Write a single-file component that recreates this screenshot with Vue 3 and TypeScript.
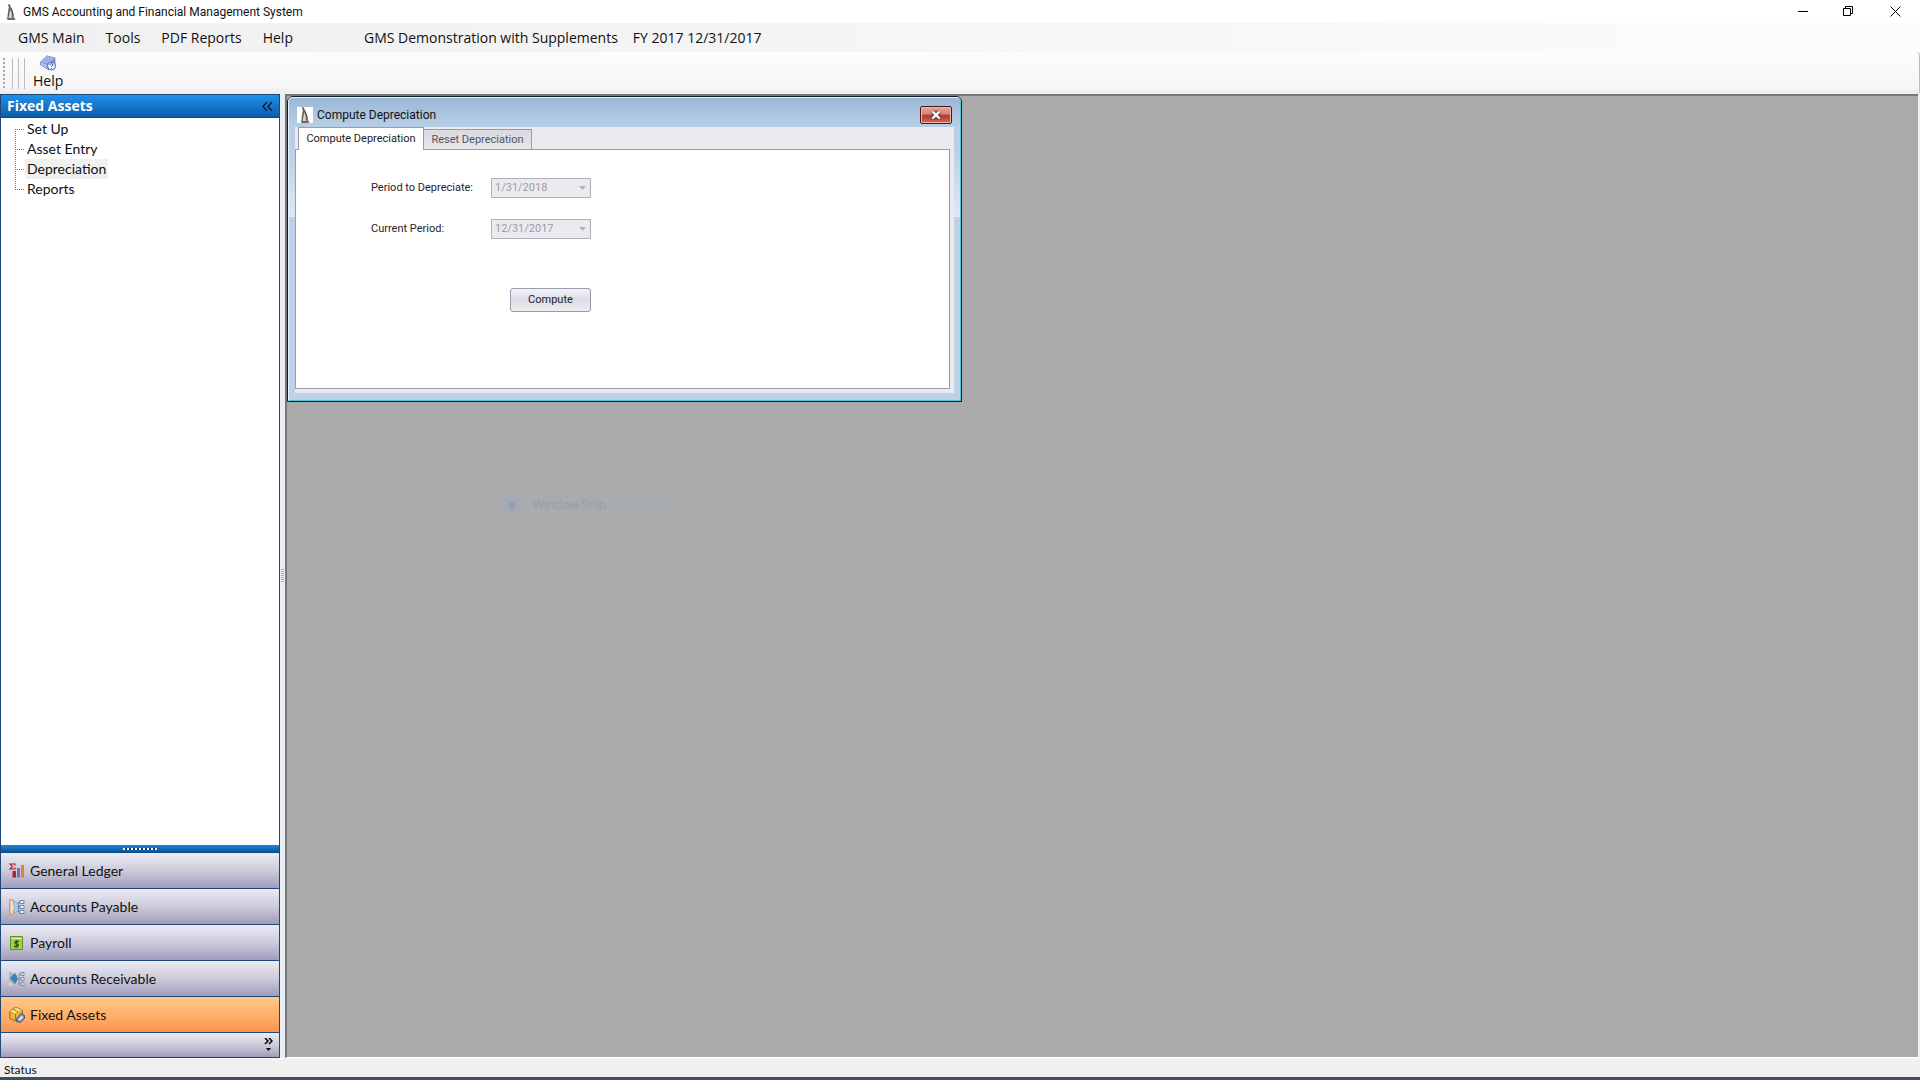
<script setup lang="ts">
import { ref } from 'vue'

interface NavGroup {
  id: string
  label: string
}

const menus: string[] = ['GMS Main', 'Tools', 'PDF Reports', 'Help']
const treeItems: string[] = ['Set Up', 'Asset Entry', 'Depreciation', 'Reports']
const groups: NavGroup[] = [
  { id: 'gl', label: 'General Ledger' },
  { id: 'ap', label: 'Accounts Payable' },
  { id: 'pr', label: 'Payroll' },
  { id: 'ar', label: 'Accounts Receivable' },
  { id: 'fa', label: 'Fixed Assets' },
]

const selectedItem = ref('Depreciation')
const selectedGroup = ref('fa')
const period = ref('1/31/2018')
const current = ref('12/31/2017')
</script>

<template>
  <div class="app">
    <header class="titlebar">
      <svg class="penguin" width="10" height="16" viewBox="0 0 10 16">
        <path d="M1.500.5L3.500 0l1 2 2 4 1.200 4v3l1.800 1.500-.5 1.500H2l-1.500-1 1-2.500L2 7l.8-4z" fill="#8b867d" />
        <path d="M3.800 5l1.700 4v5H3.200V9z" fill="#dedbd4" />
        <path d="M3 1l1 3-1.800 8M5 4l2 6v3M2 15h6" stroke="#45413c" stroke-width=".8" fill="none" />
      </svg>
      <h1>GMS Accounting and Financial Management System</h1>
      <div class="controls">
        <button type="button" aria-label="Minimize">
          <svg width="11" height="11"><path d="M0 5.500h10" stroke="#000" /></svg>
        </button>
        <button type="button" aria-label="Restore">
          <svg width="11" height="11">
            <path d="M.5 2.500h7v7h-7zM2.500 2.500v-2h7v7h-2" fill="none" stroke="#000" />
          </svg>
        </button>
        <button type="button" aria-label="Close">
          <svg width="11" height="11"><path d="M.5.5l10 10M10.500.5l-10 10" stroke="#000" /></svg>
        </button>
      </div>
    </header>

    <nav class="menubar">
      <button v-for="m in menus" :key="m" type="button">{{ m }}</button>
      <span class="company">GMS Demonstration with Supplements</span>
      <span>FY 2017 12/31/2017</span>
    </nav>

    <div class="toolbar">
      <span class="grip"></span>
      <span class="bars"><i></i><i></i><i></i></span>
      <button type="button" class="tool">
        <svg width="16" height="16" viewBox="0 0 16 16">
          <path d="M.5 7L7 .8 15 3v7l-6 5L.5 10z" fill="#7f96d2" stroke="#6078b8" stroke-width=".7" />
          <path d="M.5 7L7 .8 15 3 8 9z" fill="#9fb1e2" />
          <path d="M1 8.200l7 3M1 9.500l7 3.500" stroke="#e4eafa" stroke-width=".8" />
          <circle cx="11.500" cy="11" r="4" fill="#eef3ff" stroke="#4a69b8" />
          <path d="M10 10q.2-1.600 1.600-1.500 1.600.2 1.200 1.500L11.500 11.300v.6M11.500 13v.8" fill="none" stroke="#2850a8" />
        </svg>
        <span>Help</span>
      </button>
    </div>

    <div class="body">
      <aside class="sidebar">
        <div class="side-head">
          <h2>Fixed Assets</h2>
          <button type="button" aria-label="Collapse">
            <svg width="11" height="9"><path d="M5 0L1 4.500 5 9M10 0L6 4.500 10 9" fill="none" stroke="#06182e" stroke-width="1.300" /></svg>
          </button>
        </div>
        <ul class="tree">
          <li v-for="t in treeItems" :key="t">
            <a href="#" :class="{ on: t === selectedItem }" @click.prevent="selectedItem = t">{{ t }}</a>
          </li>
        </ul>
        <div class="side-split"><span></span></div>
        <button
          v-for="g in groups"
          :key="g.id"
          type="button"
          class="group"
          :class="{ on: g.id === selectedGroup }"
          @click="selectedGroup = g.id"
        >
          <svg width="16" height="16" viewBox="0 0 16 16">
            <template v-if="g.id === 'gl'">
              <path d="M6 2.500V1H1l2.500 2.500L1 6h5V4.500" fill="none" stroke="#a82432" stroke-width="1.200" />
              <path d="M3.500 8H7v6.500H3.500z" fill="#b5202f" />
              <path d="M8 5h3v9.500H8z" fill="#71749b" />
              <path d="M12 2h3v12.500h-3z" fill="#dd8138" />
            </template>
            <template v-else-if="g.id === 'ap'">
              <path d="M.8.8h3l3.700 4v6l-3.700 4.500h-3z" fill="#f8dcc4" stroke="#e07a4c" />
              <path d="M4 2q6 1 6 6t-6 6q3-6 0-12z" fill="#a8cfe6" stroke="#8aa9c0" />
              <path d="M8 8h3M9.500 3v10M9.500 3H11M9.500 13H11" stroke="#6d84aa" fill="none" />
              <path d="M11 1.500h4v3h-4zM11 6.500h4v3h-4zM11 11.500h4v3h-4z" fill="#eef4ff" stroke="#6d84aa" />
            </template>
            <template v-else-if="g.id === 'pr'">
              <path d="M1.500 1.500h12v13h-12z" fill="#a4cf4a" stroke="#5f9420" />
              <path d="M2 3.500h11" stroke="#eaf6c8" />
              <path d="M10 6.500H7q-2 1 0 2.200 3 .6 2 2.300-1 .8-4 .3M7.500 5v8" fill="none" stroke="#2c5d0c" stroke-width="1.500" />
            </template>
            <template v-else-if="g.id === 'ar'">
              <path d="M0 .5l7 3v8l-7 4z" fill="#9fc0b8" />
              <path d="M0 15.500v-5l4.500 2.800z" fill="#f0cf9c" />
              <path d="M1 7l5-5q5 6 0 11z" fill="#3f7fb8" />
              <path d="M8 8h4M10 3v10M10 3h2M10 13h2" stroke="#8388a0" fill="none" />
              <path d="M12 1.500h3v3h-3zM12 6.500h3v3h-3zM12 11.500h3v3h-3z" fill="#e6e8f0" stroke="#8388a0" />
            </template>
            <template v-else>
              <path d="M.8 5l3-3.500L8 .6l5.500 2.900v6L7 14 .8 11.500z" fill="#f0b640" stroke="#9a6a14" />
              <path d="M.8 5l3-3.500L8 .6l5.500 2.900L6.500 7z" fill="#fde08c" stroke="#b07a1a" stroke-width=".6" />
              <path d="M6.500 7v6.500M3.500 2l6 3.200" stroke="#a87418" />
              <path d="M7.500 11.500l4.500-5 3.500 2v3l-4.500 4-3.500-1z" fill="#8c96b4" stroke="#4b536f" />
              <path d="M9.500 12.500l3-3.500 1.500 1-3 3.500z" fill="#eef2ff" />
            </template>
          </svg>
          <span>{{ g.label }}</span>
        </button>
        <div class="overflow">
          <button type="button" aria-label="Configure buttons">
            <svg width="9" height="14"><path d="M1 0l3 3-3 3M5 0l3 3-3 3" fill="none" stroke="#000" stroke-width="1.500" /><path d="M2 10h5l-2.500 3z" /></svg>
          </button>
        </div>
      </aside>

      <div class="splitter"><span></span></div>

      <main class="workspace">
        <section class="dialog" aria-label="Compute Depreciation">
          <div class="frame">
            <div class="dialog-title">
              <span class="dialog-icon">
                <svg width="16" height="16" viewBox="-3 0 16 16">
                  <path d="M1.500.5L3.500 0l1 2 2 4 1.200 4v3l1.800 1.500-.5 1.500H2l-1.500-1 1-2.500L2 7l.8-4z" fill="#8b867d" />
                  <path d="M3.800 5l1.700 4v5H3.200V9z" fill="#dedbd4" />
                  <path d="M3 1l1 3-1.800 8M5 4l2 6v3M2 15h6" stroke="#45413c" stroke-width=".8" fill="none" />
                </svg>
              </span>
              <h2>Compute Depreciation</h2>
              <button type="button" class="close" aria-label="Close dialog">
                <svg width="12" height="10" viewBox="0 0 12 10">
                  <path d="M2.500 1.500l7 7M9.500 1.500l-7 7" stroke="#5d4044" stroke-width="4.400" />
                  <path d="M2.500 1.500l7 7M9.500 1.500l-7 7" stroke="#fff" stroke-width="2.400" />
                </svg>
              </button>
            </div>
            <div class="client">
              <div class="tabs" role="tablist">
                <button type="button" role="tab" class="on" aria-selected="true">Compute Depreciation</button>
                <button type="button" role="tab" aria-selected="false">Reset Depreciation</button>
              </div>
              <form class="panel" @submit.prevent>
                <label for="period">Period to Depreciate:</label>
                <span class="combo">
                  <select id="period" v-model="period" disabled><option>1/31/2018</option></select>
                  <svg width="7" height="4"><path d="M0 0h7L3.500 4z" fill="#b4b4bc" /></svg>
                </span>
                <label for="current">Current Period:</label>
                <span class="combo">
                  <select id="current" v-model="current" disabled><option>12/31/2017</option></select>
                  <svg width="7" height="4"><path d="M0 0h7L3.500 4z" fill="#b4b4bc" /></svg>
                </span>
                <button type="submit">Compute</button>
              </form>
            </div>
          </div>
        </section>
        <div class="ghost"><i></i><span>Window Snip</span></div>
      </main>
    </div>

    <footer class="status">Status</footer>
  </div>
</template>

<style>
body {
  margin: 0;
}
</style>

<style scoped>
.app {
  display: flex;
  flex-direction: column;
  min-height: 100vh;
  box-sizing: border-box;
  border-bottom: 3px solid #3f4f60;
  background: #f0f0f0;
  color: #111;
  font: 14px/20px "Open Sans", "Noto Sans", sans-serif;
}
.app * {
  box-sizing: border-box;
}
button {
  margin: 0;
  padding: 0;
  border: 0;
  background: none;
  color: inherit;
  font: inherit;
}
h1,
h2 {
  margin: 0;
  font: inherit;
}
svg {
  display: block;
  flex: none;
}

.titlebar {
  display: flex;
  align-items: center;
  height: 23px;
  padding-left: 6px;
  background: #fff;
}
.titlebar h1 {
  margin-left: 7px;
  font: 12px/20px Roboto, "Open Sans", sans-serif;
}
.controls {
  display: flex;
  height: 20px;
  margin-left: auto;
}
.controls button {
  display: grid;
  place-items: center;
  width: 45px;
}
.controls button:last-child {
  width: 49px;
}

.menubar {
  display: flex;
  align-items: center;
  height: 29px;
  padding-left: 18px;
  background: linear-gradient(90deg, #f0f0f0, #fcfcfc);
}
.menubar button {
  margin-right: 21px;
}
.menubar .company {
  margin: 0 15px 0 50px;
}

.toolbar {
  display: flex;
  align-items: center;
  height: 42px;
  padding-left: 3px;
  border-right: 1px solid #bbb;
  border-radius: 0 4px 4px 0;
  background: linear-gradient(#fcfcfc, #f6f6f6 80%, #ededed);
}
.grip {
  width: 2px;
  height: 31px;
  background: repeating-linear-gradient(#a8a8a8 0 2px, transparent 2px 4px);
}
.bars {
  display: flex;
  gap: 5px;
  margin-left: 7px;
}
.bars i {
  width: 1px;
  height: 31px;
  background: #bcbcbc;
}
.tool {
  display: flex;
  flex-direction: column;
  align-items: center;
  margin-left: 8px;
}

.body {
  display: flex;
  flex: 1;
}
.sidebar {
  display: flex;
  flex-direction: column;
  width: 280px;
  border: 1px solid #1f4777;
  font-family: Lato, "Open Sans", sans-serif;
}
.side-head {
  display: flex;
  align-items: center;
  justify-content: space-between;
  height: 23px;
  padding: 0 6px;
  border-bottom: 1px solid #0b4685;
  background: linear-gradient(#2090ec, #0b5ca8);
  color: #fff;
}
.side-head h2 {
  font: 700 14px/20px "Open Sans", sans-serif;
}
.tree {
  flex: 1;
  margin: 0;
  padding: 1px 0 0 14px;
  background: #fff;
  list-style: none;
}
.tree li {
  display: flex;
  align-items: center;
  height: 20px;
  background:
    repeating-linear-gradient(90deg, #777 0 1px, transparent 1px 2px) 0 10px / 10px 1px no-repeat,
    repeating-linear-gradient(#777 0 1px, transparent 1px 2px) 0 0 / 1px 100% no-repeat;
}
.tree li:first-child {
  background-position: 0 10px, 0 10px;
}
.tree li:last-child {
  background-size: 10px 1px, 1px 10px;
}
.tree a {
  margin-left: 10px;
  padding: 0 2px;
  color: inherit;
  text-decoration: none;
}
.tree a.on {
  background: #f0f0f0;
}
.side-split {
  display: grid;
  place-items: center;
  height: 8px;
  border-bottom: 1px solid #0b4685;
  background: linear-gradient(#1e86dc, #0b5599);
}
.side-split span {
  width: 35px;
  height: 2px;
  background: repeating-linear-gradient(90deg, #fff 0 2px, #0b3f70 2px 4px);
}
.group {
  display: flex;
  align-items: center;
  gap: 5px;
  height: 36px;
  padding-left: 8px;
  border-bottom: 1px solid #1f4777;
  background: linear-gradient(#ececf3, #c9c7d9 55%, #a09cbb);
}
.group.on {
  background: linear-gradient(#ffc98a, #ffae6b 55%, #fb9450);
}
.overflow {
  display: flex;
  align-items: flex-start;
  justify-content: flex-end;
  height: 24px;
  padding: 5px 6px 0 0;
  background: linear-gradient(#ececf3, #c9c7d9 55%, #a09cbb);
}

.splitter {
  display: flex;
  align-items: center;
  width: 5px;
  padding-left: 1px;
  background: #e9eef5;
}
.splitter span {
  width: 3px;
  height: 14px;
  background: repeating-linear-gradient(#a6adb6 0 1px, transparent 1px 2px);
}

.workspace {
  position: relative;
  flex: 1;
  margin-right: 2px;
  border-top: 2px solid #777;
  border-left: 2px solid #777;
  border-bottom: 1px solid #fff;
  background: #ababab;
}
.dialog {
  position: absolute;
  top: 0;
  left: 0;
  width: 675px;
  border: 1px solid #0b1a24;
  border-radius: 6px 6px 0 0;
  background: #bcd2e8;
  font: 11px/16px Roboto, "Open Sans", sans-serif;
}
.frame {
  padding: 0 6px 7px;
  border: 1px solid #e6f4fb;
  border-right-color: #54c6dc;
  border-bottom-color: #54c6dc;
  border-radius: 5px 5px 0 0;
  background:
    linear-gradient(#9bb7d5, #b9cfe8 30px, #b9cfe8 50px, #dfe9f5 119px, transparent 119px);
}
.dialog-title {
  display: flex;
  align-items: center;
  height: 29px;
  padding: 4px 2px 0 2px;
}
.dialog-icon {
  background: #fff;
}
.dialog-title h2 {
  margin-left: 4px;
  font-size: 12px;
}
.close {
  display: grid;
  place-items: center;
  width: 32px;
  height: 18px;
  margin-left: auto;
  border: 1px solid #4c1518;
  border-radius: 2px;
  background: linear-gradient(#e5a79f, #d58377 45%, #b93a28 50%, #d1644f);
  box-shadow: inset 0 0 0 1px #f0b8ae;
}
.client {
  padding: 0 4px 4px 0;
  background: #ebebef;
}
.tabs {
  display: flex;
  align-items: flex-end;
  height: 23px;
  padding-left: 3px;
  box-shadow: inset 0 -1px #9a9aae, inset -4px 0 #ebebef;
}
.tabs button {
  height: 21px;
  width: 108px;
  border: 1px solid #9a9aae;
  border-left: 0;
  background: linear-gradient(#d9d9e1, #e6e6eb);
  color: #55555f;
}
.tabs .on {
  width: 126px;
  height: 23px;
  border-left: 1px solid #9a9aae;
  border-bottom: 0;
  background: #fff;
  color: #222;
}
.panel {
  display: grid;
  grid-template-columns: 120px 100px;
  grid-template-rows: 20px 20px 24px;
  row-gap: 21px;
  align-items: center;
  height: 239px;
  align-content: start;
  padding: 28px 0 0 75px;
  border: 1px solid #9a9aae;
  border-top: 0;
  background: #fff;
  color: #24242c;
}
.combo {
  position: relative;
}
.combo svg {
  position: absolute;
  top: 8px;
  right: 5px;
}
select {
  display: block;
  width: 100px;
  height: 20px;
  margin: 0;
  padding: 0 3px;
  border: 1px solid #b0b0bc;
  border-radius: 0;
  background: #ebebef;
  color: #9c9ca6;
  font: inherit;
  opacity: 1;
  appearance: none;
}
.panel button {
  grid-column: 2;
  justify-self: end;
  width: 81px;
  height: 24px;
  margin-top: 56px;
  border: 1px solid #9a9aae;
  border-radius: 3px;
  background: linear-gradient(#f3f3f7, #dcdce4 50%, #ededf1);
}
.ghost {
  position: absolute;
  top: 399px;
  left: 212px;
  display: flex;
  align-items: center;
  width: 172px;
  height: 20px;
  padding-left: 4px;
  background: #a8abaf;
  color: #9a9da2;
  font-size: 12px;
}
.ghost i {
  width: 18px;
  height: 18px;
  margin-right: 12px;
  background: radial-gradient(circle, #949aa6 2px, #a4aab4 4px);
}

.status {
  height: 19px;
  padding-left: 4px;
  border-top: 1px solid #fafafa;
  font: 12px/22px Lato, "Open Sans", sans-serif;
}
</style>
